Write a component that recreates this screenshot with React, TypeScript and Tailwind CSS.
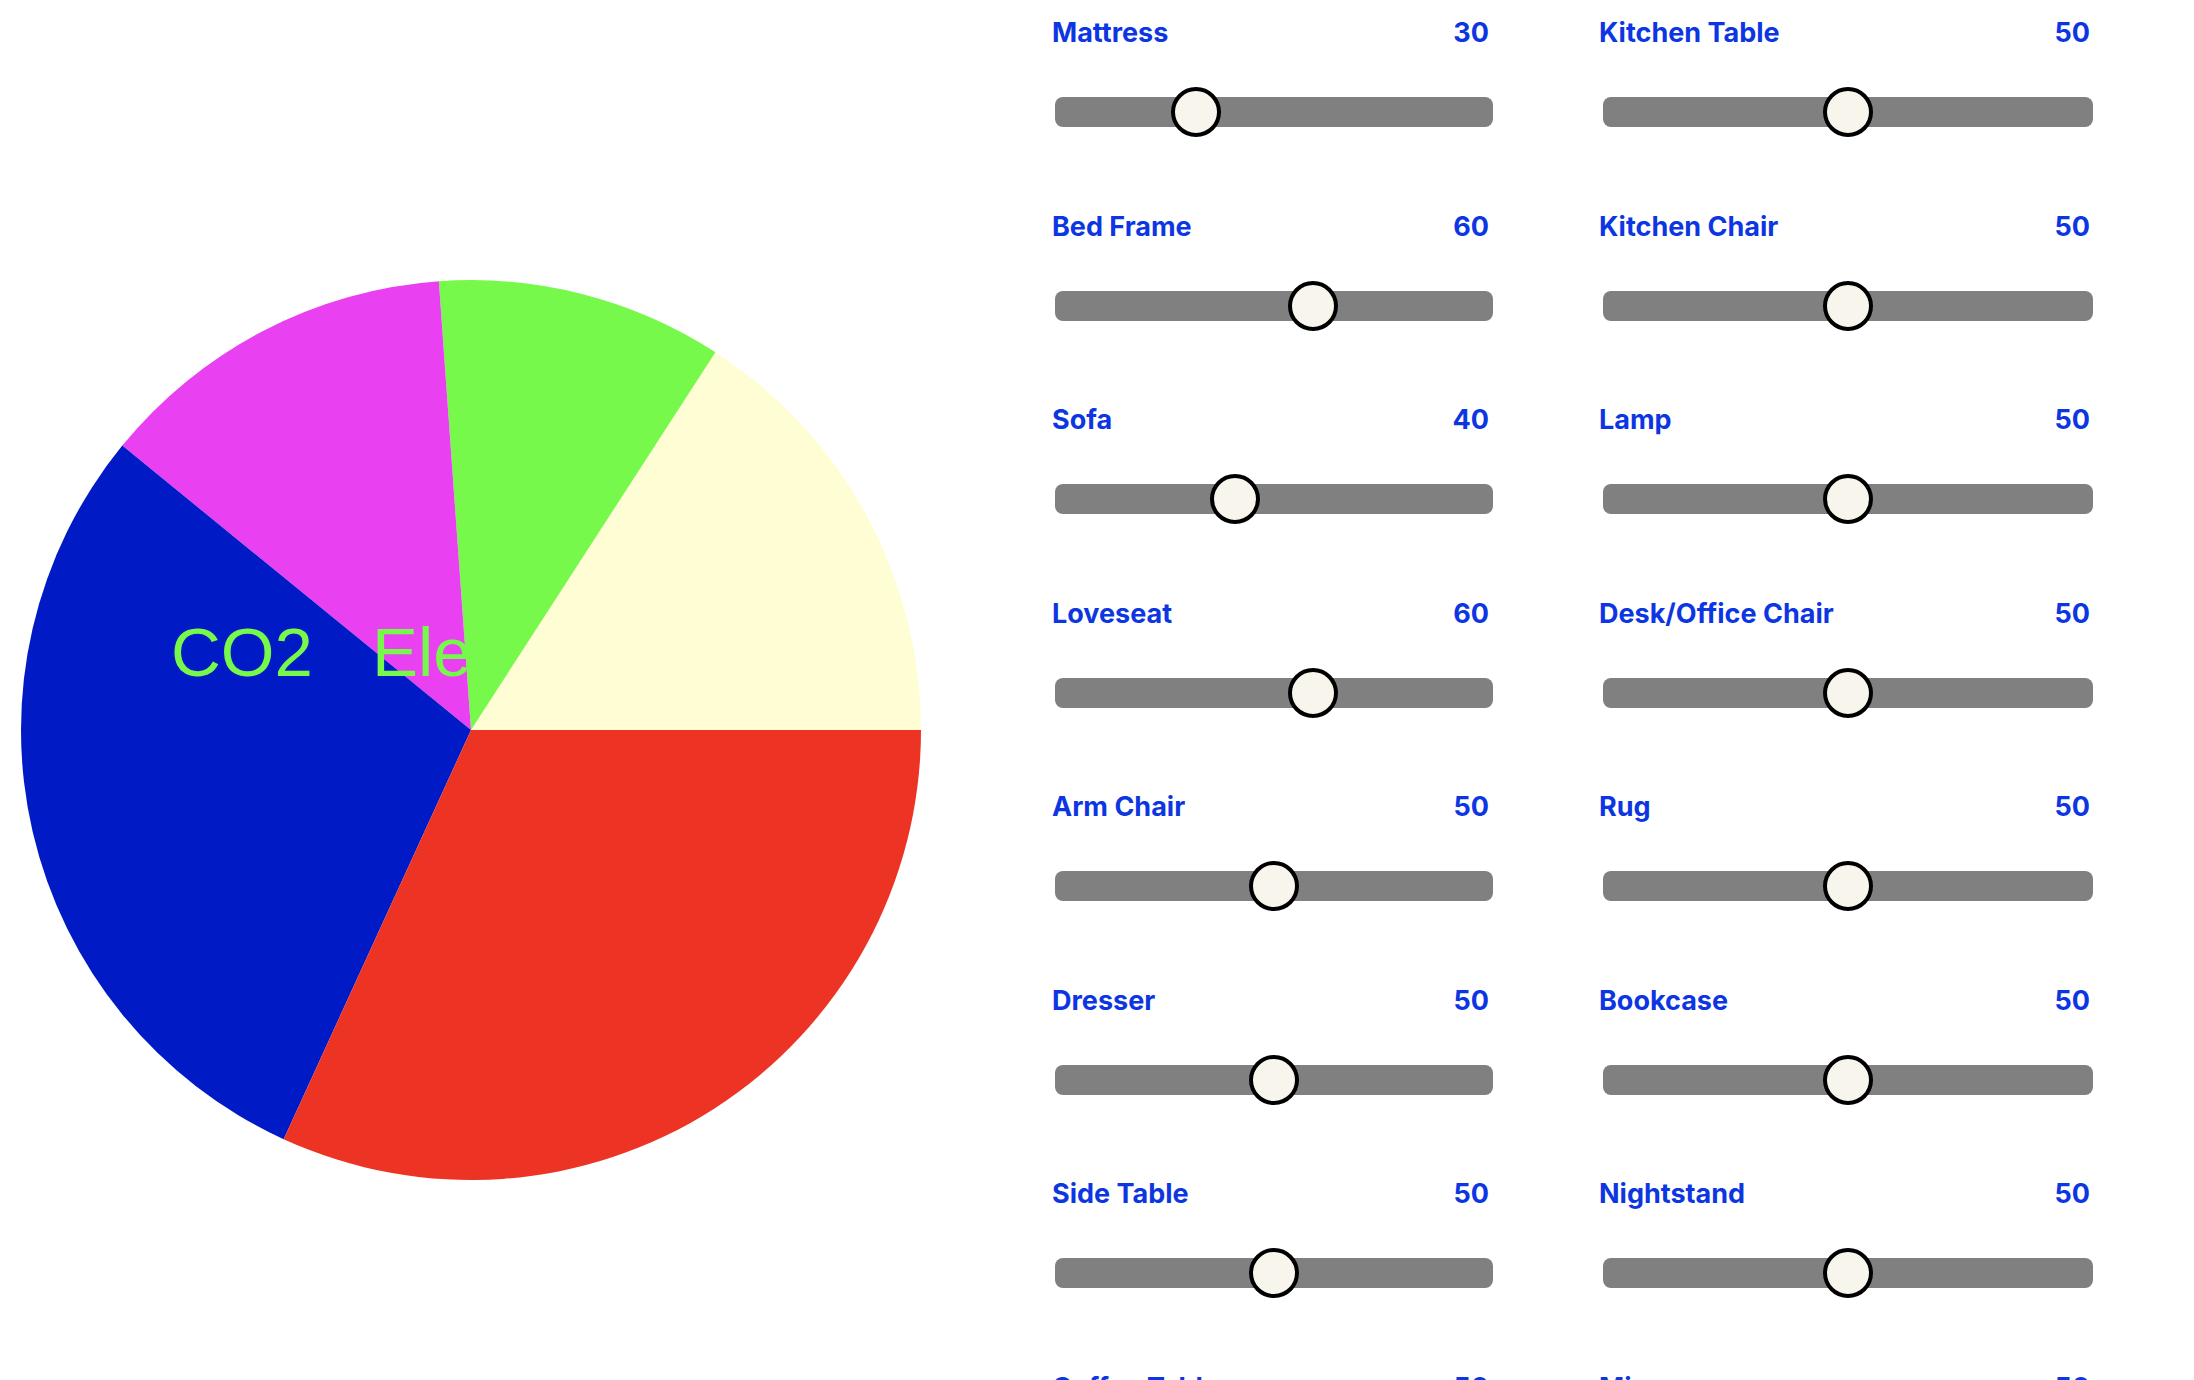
import React from 'react';

type Item = { name: string; value: number };

const leftItems: Item[] = [
  { name: 'Mattress', value: 30 },
  { name: 'Bed Frame', value: 60 },
  { name: 'Sofa', value: 40 },
  { name: 'Loveseat', value: 60 },
  { name: 'Arm Chair', value: 50 },
  { name: 'Dresser', value: 50 },
  { name: 'Side Table', value: 50 },
  { name: 'Coffee Table', value: 50 },
];

const rightItems: Item[] = [
  { name: 'Kitchen Table', value: 50 },
  { name: 'Kitchen Chair', value: 50 },
  { name: 'Lamp', value: 50 },
  { name: 'Desk/Office Chair', value: 50 },
  { name: 'Rug', value: 50 },
  { name: 'Bookcase', value: 50 },
  { name: 'Nightstand', value: 50 },
  { name: 'Mirror', value: 50 },
];

// slice boundaries, degrees counter-clockwise from 3 o'clock
const slices = [
  { from: 0, to: 57.1, color: '#fefdd3' },
  { from: 57.1, to: 94.1, color: '#77f94c' },
  { from: 94.1, to: 140.8, color: '#e940f2' },
  { from: 140.8, to: 245.4, color: '#001ac5' },
  { from: 245.4, to: 360, color: '#ec3324' },
];

const CX = 471;
const CY = 730;
const R = 450;

function slicePath(from: number, to: number) {
  const a1 = (from * Math.PI) / 180;
  const a2 = (to * Math.PI) / 180;
  const x1 = CX + R * Math.cos(a1);
  const y1 = CY - R * Math.sin(a1);
  const x2 = CX + R * Math.cos(a2);
  const y2 = CY - R * Math.sin(a2);
  const large = to - from > 180 ? 1 : 0;
  return `M ${CX} ${CY} L ${x1} ${y1} A ${R} ${R} 0 ${large} 0 ${x2} ${y2} Z`;
}

function PieChart() {
  return (
    <svg width="942" height="1200" viewBox="0 0 942 1200" className="block">
      {slices.map((s) => (
        <path key={s.color} d={slicePath(s.from, s.to)} fill={s.color} />
      ))}
      <text x="171" y="676" fontSize="69" fill="#77f94c" style={{ fontFamily: '"Liberation Sans", Arial, sans-serif' }}>
        CO2
      </text>
      <text x="372" y="676" fontSize="69" fill="#77f94c" style={{ fontFamily: '"Liberation Sans", Arial, sans-serif' }}>
        Ele
      </text>
    </svg>
  );
}

function SliderRow({ item, trackWidth, inset }: { item: Item; trackWidth: number; inset: 'left' | 'right' }) {
  const thumbLeft = (item.value / 100) * (trackWidth - 50);
  return (
    <div className="h-[193.55px] pt-[17px]">
      <div
        className={`flex justify-between h-8 text-[27px] leading-8 font-bold text-[#0d36e3] ${inset === 'left' ? 'pr-[4px]' : 'pr-[3px]'}`}
      >
        <span>{item.name}</span>
        <span>{item.value}</span>
      </div>
      <div
        className={`relative mt-[48px] h-[30px] rounded-lg bg-[#808080] ${inset === 'left' ? 'ml-[3px] w-[438px]' : 'ml-[4px] w-[490px]'}`}
      >
        <div
          className="absolute top-1/2 -translate-y-1/2 w-[50px] h-[50px] rounded-full border-4 border-black bg-[#f8f6ec]"
          style={{ left: thumbLeft }}
        />
      </div>
    </div>
  );
}

export default function App() {
  return (
    <div className="flex min-h-screen bg-white" style={{ fontFamily: 'Inter, "Noto Sans", sans-serif' }}>
      {/* chart */}
      <div className="w-[1052px] shrink-0">
        <PieChart />
      </div>

      {/* sliders */}
      <div className="w-[441px] shrink-0 flex flex-col">
        {leftItems.map((it) => (
          <SliderRow key={it.name} item={it} trackWidth={438} inset="left" />
        ))}
      </div>
      <div className="w-[494px] shrink-0 ml-[106px] flex flex-col">
        {rightItems.map((it) => (
          <SliderRow key={it.name} item={it} trackWidth={490} inset="right" />
        ))}
      </div>
    </div>
  );
}
